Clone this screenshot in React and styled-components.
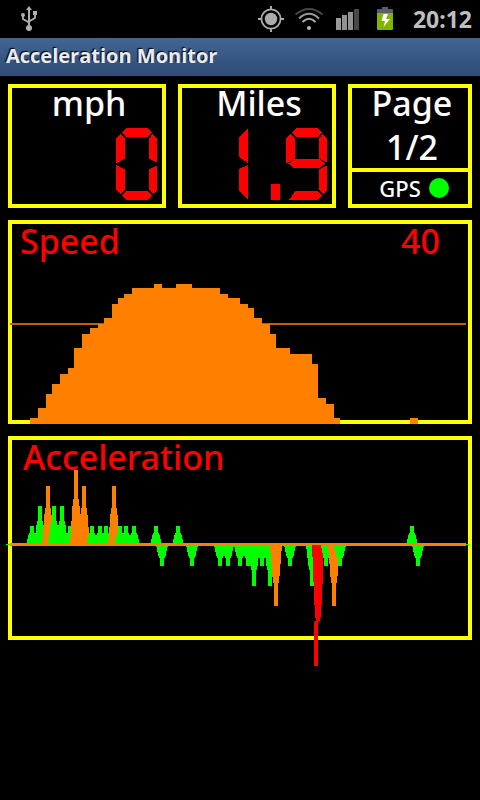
import React from 'react';
import styled, { createGlobalStyle } from 'styled-components';

const GlobalStyle = createGlobalStyle`
  * {
    box-sizing: border-box;
  }

  body {
    margin: 0;
    min-height: 100vh;
    background: #000;
    color: #fff;
    font-family: "Noto Sans", "Open Sans", sans-serif;
  }
`;

// Styled Components
const StatusBar = styled.header`
  display: flex;
  align-items: center;
  gap: 12px;
  height: 38px;
  padding: 0 8px 0 16px;
`;

const StatusIcon = styled.svg`
  flex: none;
  width: 26px;
  height: 38px;
  margin-right: ${props => (props.$push ? 'auto' : '0')};
`;

const Clock = styled.time`
  min-width: 62px;
  font-size: 23px;
  font-weight: 700;
  line-height: 38px;
  text-align: right;
  color: #bebebe;
`;

const TitleBar = styled.h1`
  height: 38px;
  margin: 0;
  padding: 0 6px;
  font-family: "Open Sans", sans-serif;
  font-size: 20px;
  font-weight: 700;
  line-height: 36px;
  color: #ebebeb;
  text-shadow: -1px -1px 1px #000;
  background: linear-gradient(#426694, #34557f 60%, #304e78);
`;

const Main = styled.main`
  display: flex;
  flex-direction: column;
  gap: 12px;
  min-height: calc(100vh - 76px);
  padding: 8px;
`;

const Readouts = styled.div`
  display: grid;
  grid-template-columns: 158fr 158fr 124fr;
  gap: 12px;
`;

const Panel = styled.section`
  border: 4px solid #ff0;
`;

const Readout = styled(Panel)`
  display: flex;
  flex-direction: column;
  justify-content: space-between;
  padding: 0 5px 4px;
`;

const Label = styled.div`
  padding-left: 4px;
  font-size: 34px;
  font-weight: 500;
  line-height: 30px;
  text-align: center;
`;

const Digits = styled.svg`
  align-self: flex-end;
  width: ${props => props.$width}px;
  height: 72px;
  fill: #f00;
`;

const PageLines = styled.div`
  display: flex;
  flex-direction: column;
  gap: 14px;
  padding-bottom: 6px;
  border-bottom: 4px solid #ff0;
`;

const GpsRow = styled.div`
  display: flex;
  align-items: center;
  justify-content: center;
  gap: 8px;
  height: 32px;
  padding-left: 8px;
  font-size: 22px;
  font-weight: 500;
`;

const GpsLight = styled.span`
  width: 20px;
  height: 20px;
  border-radius: 50%;
  background: #0f0;
`;

const ChartPanel = styled(Panel)`
  position: relative;
  min-height: 204px;
`;

const ChartHeader = styled.div`
  display: flex;
  justify-content: space-between;
  padding: 0 28px 0 ${props => props.$indent}px;
  font-size: 34px;
  font-weight: 500;
  line-height: 34px;
  color: #f00;
`;

const ChartName = styled.h2`
  margin: 0;
  font-size: inherit;
  font-weight: inherit;
`;

// plots are drawn over the frame, and may run past it
const Plot = styled.svg`
  position: absolute;
  top: -4px;
  left: -4px;
  width: calc(100% + 8px);
  height: calc(100% + 8px);
  overflow: visible;
`;

// Seven segment shapes on a 41x72 cell
const SEGMENTS = {
  top: '6,4.5 10.5,0 31.5,0 36,4.5 31.5,9 10.5,9',
  topLeft: '4.5,6 9,11 9,30.5 0,35.5 0,10.5',
  topRight: '36.5,6 41,10.5 41,34.5 33,30.5 33,11',
  middle: '2.5,35.5 8,31 33,31 39,35.5 33,40 8,40',
  bottomLeft: '0,37 9,41.5 9,61.5 5,66 0,61.5',
  bottomRight: '41,37.5 41,62.5 37,66 33,61.5 33,41.5',
  bottom: '6,67.5 10.5,63 31.5,63 36,67.5 31.5,72 10.5,72',
  bottomOpen: '3,72 9.5,63 31.5,63 36,67.5 31.5,72',
};

const ZERO = ['top', 'topLeft', 'topRight', 'bottomLeft', 'bottomRight', 'bottom'];
const NINE = ['top', 'topLeft', 'topRight', 'middle', 'bottomRight', 'bottomOpen'];

// [x, top] of every step, the next step's x closes it
const SPEED = [
  [22, 198], [30, 188], [38, 174], [44, 164], [52, 154], [60, 148], [66, 128],
  [74, 114], [82, 108], [90, 104], [96, 98], [104, 84], [110, 78], [116, 74],
  [124, 68], [146, 64], [154, 68], [168, 64], [184, 68], [212, 74], [220, 78],
  [232, 84], [240, 88], [246, 98], [254, 104], [262, 114], [268, 128],
  [282, 134], [304, 144], [310, 178], [318, 184], [326, 198], [332, 204],
  [402, 198], [410, 204],
];

const GREEN = '#0f0';
const ORANGE = '#ff8000';

// [x, height, color], negative heights are braking
const ACCELERATION = [
  [24, 19, GREEN], [32, 39, GREEN], [40, 59, ORANGE], [46, 39, GREEN],
  [54, 39, GREEN], [62, 19, GREEN], [68, 75, ORANGE], [76, 59, ORANGE],
  [84, 19, GREEN], [92, 19, GREEN], [98, 19, GREEN], [106, 59, ORANGE],
  [112, 19, GREEN], [118, 19, GREEN], [126, 19, GREEN], [148, 19, GREEN],
  [154, -21, GREEN], [170, 19, GREEN], [184, -21, GREEN], [212, -21, GREEN],
  [220, -21, GREEN], [232, -21, GREEN], [240, -21, GREEN], [246, -41, GREEN],
  [254, -21, GREEN], [262, -41, GREEN], [268, -61, ORANGE], [282, -21, GREEN],
  [304, -41, GREEN], [318, -21, GREEN], [326, -61, ORANGE], [332, -21, GREEN],
  [404, 19, GREEN], [410, -21, GREEN],
];

const AXIS = 109;

const speedPath = () => {
  let d = 'M22 204';
  SPEED.forEach(([x, top]) => {
    d += `H${x}V${top}`;
  });
  return `${d}Z`;
};

// a 4 wide bar at the tip that flares out towards the axis
const spike = (x, height) => {
  const tip = AXIS - height;
  const neck = AXIS - height * 0.62;
  return [
    `${x - 6},${AXIS}`, `${x - 3},${neck}`, `${x - 2},${neck}`, `${x - 2},${tip}`,
    `${x + 2},${tip}`, `${x + 2},${neck}`, `${x + 3},${neck}`, `${x + 6},${AXIS}`,
  ].join(' ');
};

const Digit = ({ on, x = 0 }) => (
  <g transform={`translate(${x} 0)`}>
    {on.map((name) => (
      <polygon key={name} points={SEGMENTS[name]} />
    ))}
  </g>
);

const UsbIcon = () => (
  <StatusIcon $push viewBox="0 0 26 38" role="img" aria-label="USB connected">
    <g fill="#b0b0b0">
      <path d="M13 6l3 4h-2v15h-2V10h-2z" />
      <circle cx="13" cy="28" r="3" />
      <circle cx="7" cy="15" r="2" />
      <path d="M17 11h4v4h-4z" />
    </g>
    <path d="M7 16v3l6 3.5M19 15v3l-6 3.5" fill="none" stroke="#b0b0b0" strokeWidth="1.8" />
  </StatusIcon>
);

const LocationIcon = () => (
  <StatusIcon viewBox="0 0 26 38" role="img" aria-label="Location">
    <circle cx="13" cy="19" r="6.2" fill="#ababab" />
    <circle cx="13" cy="19" r="9.6" fill="none" stroke="#ababab" strokeWidth="1.8" />
    <path d="M13 6v4M13 28v4M0 19h4M22 19h4" stroke="#ababab" strokeWidth="2" />
  </StatusIcon>
);

const WifiIcon = () => (
  <StatusIcon viewBox="0 0 26 38" role="img" aria-label="Wi-Fi" overflow="visible">
    <g fill="none" strokeWidth="2">
      <path d="M-.5 14.5Q13 3.5 26.5 14.5" stroke="#484848" />
      <path d="M3 18.5Q13 9 23 18.5" stroke="#9a9a9a" />
      <path d="M6.5 22Q13 15.5 19.5 22" stroke="#ababab" />
    </g>
    <circle cx="13" cy="28" r="2" fill="#b8b8b8" />
  </StatusIcon>
);

const SignalIcon = () => (
  <StatusIcon viewBox="0 0 26 38" role="img" aria-label="Signal strength">
    <path d="M2 18h5v12H2z" fill="#9a9a9a" />
    <path d="M8 15h5v15H8z" fill="#929292" />
    <path d="M14 12h5v18h-5z" fill="#929292" />
    <path d="M20 9h5v21h-5z" fill="#484848" />
  </StatusIcon>
);

const BatteryIcon = () => (
  <StatusIcon viewBox="0 0 26 38" role="img" aria-label="Battery charging">
    <path d="M10 7h6v2h4q1 0 1 1v4H5v-4q0-1 1-1h4z" fill="#5e5e5e" />
    <path d="M5 13h16v16q0 1-1 1H6q-1 0-1-1z" fill="#80b400" />
    <path d="M11.5 14h4.5l-2 5h4l-6.5 8 1.5-6H9.5z" fill="#fff" />
  </StatusIcon>
);

const App = () => (
  <>
    <GlobalStyle />
    <StatusBar>
      <UsbIcon />
      <LocationIcon />
      <WifiIcon />
      <SignalIcon />
      <BatteryIcon />
      <Clock>20:12</Clock>
    </StatusBar>
    <TitleBar>Acceleration Monitor</TitleBar>

    <Main>
      <Readouts>
        <Readout>
          <Label>mph</Label>
          <Digits $width={41} viewBox="0 0 41 72" shapeRendering="crispEdges" role="img" aria-label="0">
            <Digit on={ZERO} />
          </Digits>
        </Readout>

        <Readout>
          <Label>Miles</Label>
          <Digits $width={88} viewBox="0 0 88 72" shapeRendering="crispEdges" role="img" aria-label="1.9">
            <polygon points="9,0 0,9 0,29 9,35" />
            <polygon points="9,37 0,41 0,63 9,72" />
            <rect x="32" y="56" width="9" height="16" />
            <Digit on={NINE} x={47} />
          </Digits>
        </Readout>

        <Panel>
          <PageLines>
            <Label>Page</Label>
            <Label>1/2</Label>
          </PageLines>
          <GpsRow>
            GPS
            <GpsLight />
          </GpsRow>
        </Panel>
      </Readouts>

      <ChartPanel>
        <ChartHeader $indent={8}>
          <ChartName>Speed</ChartName>
          <span>40</span>
        </ChartHeader>
        <Plot viewBox="0 0 464 204" preserveAspectRatio="none" shapeRendering="crispEdges" aria-hidden="true">
          <rect x="2" y="103" width="456" height="2" fill="#c06000" />
          <path d={speedPath()} fill={ORANGE} />
        </Plot>
      </ChartPanel>

      <ChartPanel>
        <ChartHeader $indent={11}>
          <ChartName>Acceleration</ChartName>
        </ChartHeader>
        <Plot viewBox="0 0 464 204" preserveAspectRatio="none" shapeRendering="crispEdges" aria-hidden="true">
          <rect x="-2" y="108" width="463" height="1" fill={GREEN} />
          <rect x="2" y="109" width="456" height="1" fill={GREEN} />
          {ACCELERATION.map(([x, height, color]) => (
            <polygon key={x} points={spike(x, height)} fill={color} />
          ))}
          {/* hard braking peak */}
          <path
            d="M304 109H313L315 120V138L314 159L313 179L312 185H310V230H306V185H308L307 179L306 159L305 132Z"
            fill="#f00"
          />
          <rect x="2" y="107" width="456" height="2" fill={ORANGE} />
        </Plot>
      </ChartPanel>
    </Main>
  </>
);

export default App;
